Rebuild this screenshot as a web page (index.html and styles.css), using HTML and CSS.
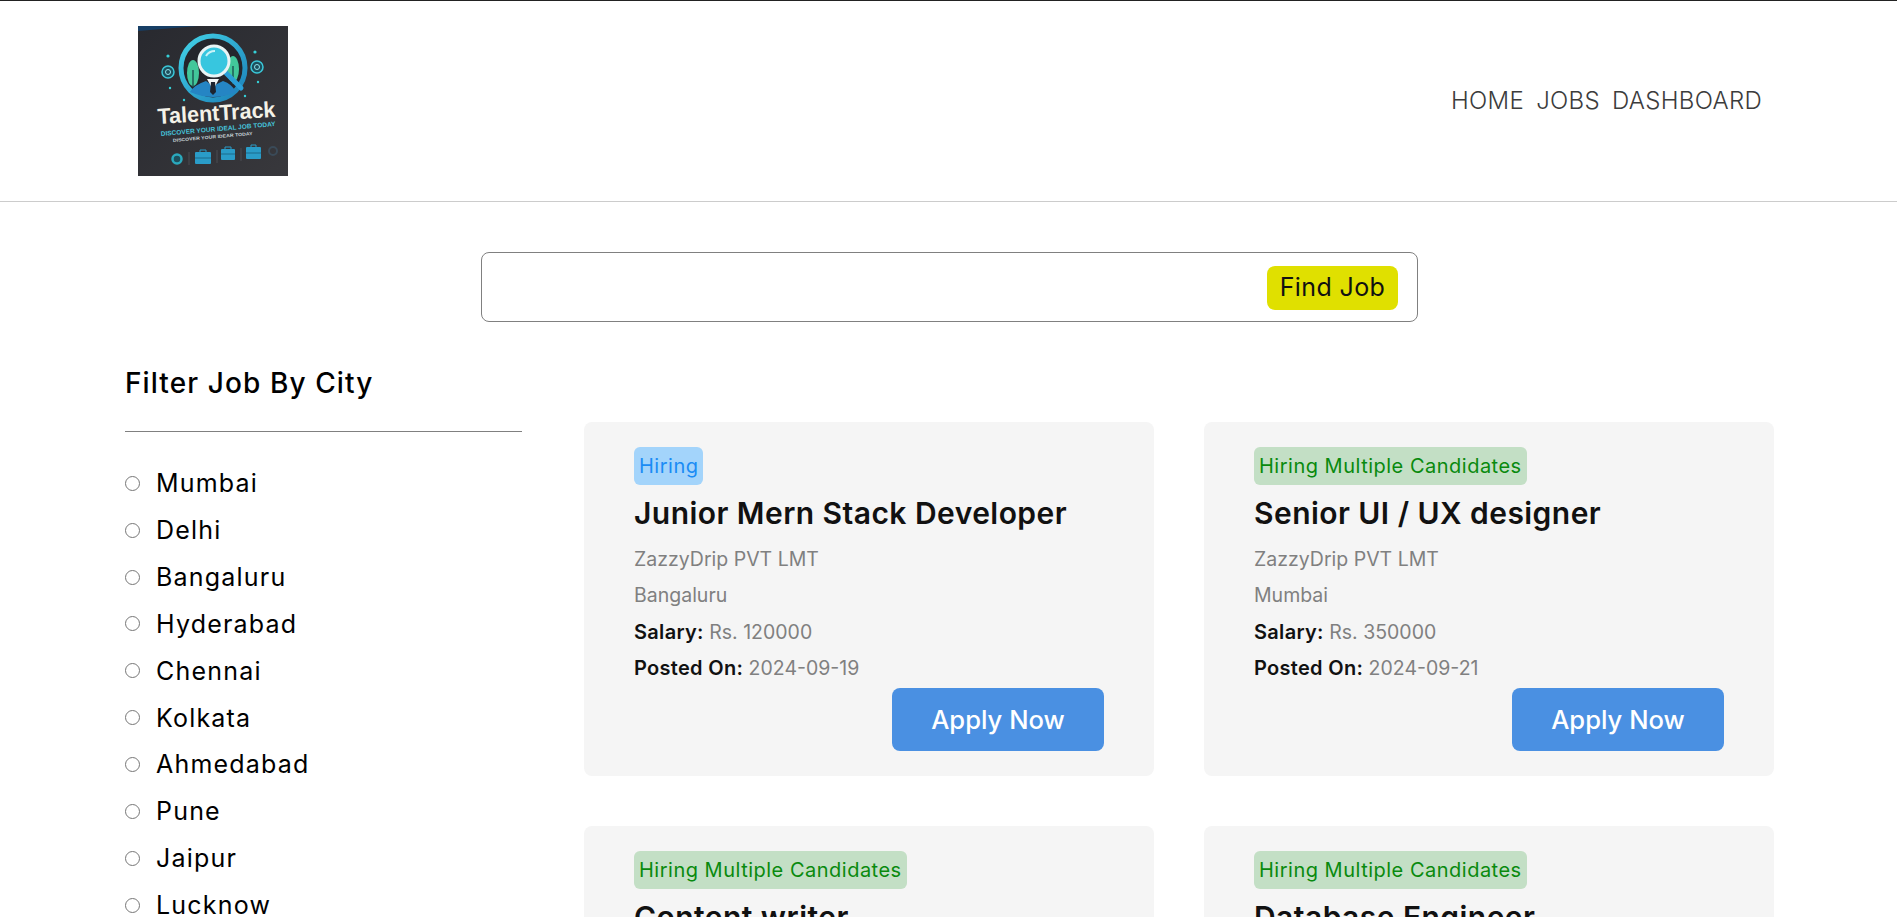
FILE: index.html
```html
<!DOCTYPE html>
<html lang="en">
<head>
    <meta charset="UTF-8">
    <meta name="viewport" content="width=device-width, initial-scale=1.0">
    <title>TalentTrack</title>
    <link rel="stylesheet" href="styles.css">
</head>
<body>
    <header class="site-header">
        <a href="#" class="logo" aria-label="TalentTrack">
            <svg width="150" height="150" viewBox="0 0 150 150">
                <defs>
                    <linearGradient id="bg" x1="0" y1="0" x2="1" y2="1">
                        <stop offset="0" stop-color="#28292f"/>
                        <stop offset="1" stop-color="#38383c"/>
                    </linearGradient>
                    <linearGradient id="ring" x1="0" y1="0" x2="1" y2="1">
                        <stop offset="0" stop-color="#43d3e8"/>
                        <stop offset="1" stop-color="#1b7fb8"/>
                    </linearGradient>
                </defs>
                <rect width="150" height="150" fill="url(#bg)"/>
                <path d="M0 0H60L0 5Z" fill="#173f66"/>
                <circle cx="75" cy="42" r="32" fill="#24262c" stroke="url(#ring)" stroke-width="5"/>
                <ellipse cx="55" cy="47" rx="6" ry="13" fill="#42c79a"/>
                <ellipse cx="95" cy="43" rx="6" ry="13" fill="#42c79a"/>
                <path d="M55 44V61M95 40V58" stroke="#1f5a55" stroke-width="1.5"/>
                <path d="M52 66Q56 59 68 55L75 60L85 55Q94 58 98 66Q75 76 52 66Z" fill="#2585c4"/>
                <path d="M69 53H81L75 64Z" fill="#f2f6f7"/>
                <path d="M73 56H77L78 66L75 69L72 66Z" fill="#1d2430"/>
                <path d="M88 47L103 62" stroke="#2a9fd8" stroke-width="5" stroke-linecap="round"/>
                <circle cx="76" cy="35" r="15" fill="#37c6df" stroke="#e8f3f4" stroke-width="3"/>
                <path d="M68 30Q71 25 77 25" stroke="#c9f3f8" stroke-width="2" fill="none"/>
                <circle cx="30" cy="46" r="6" fill="#1d4f5c" stroke="#3ac7d8" stroke-width="1.5"/>
                <circle cx="30" cy="46" r="2.5" fill="none" stroke="#8fe3ec" stroke-width="1"/>
                <circle cx="119" cy="41" r="6" fill="#1d4f5c" stroke="#3ac7d8" stroke-width="1.5"/>
                <circle cx="119" cy="41" r="2.5" fill="none" stroke="#8fe3ec" stroke-width="1"/>
                <circle cx="30" cy="30" r="1.6" fill="#35d0d8"/>
                <circle cx="117" cy="26" r="1.6" fill="#35d0d8"/>
                <circle cx="32" cy="62" r="1.2" fill="#35d0d8"/>
                <circle cx="120" cy="56" r="1.2" fill="#35d0d8"/>
                <circle cx="107" cy="70" r="1.2" fill="#35d0d8"/>
                <circle cx="46" cy="74" r="1.2" fill="#35d0d8"/>
                <text x="20" y="98" transform="rotate(-3.5 20 98)" textLength="118" lengthAdjust="spacingAndGlyphs" class="logo-name">TalentTrack</text>
                <text x="23" y="110" transform="rotate(-5 23 110)" textLength="115" lengthAdjust="spacingAndGlyphs" class="logo-tag">DISCOVER YOUR IDEAL JOB TODAY</text>
                <text x="35" y="116" transform="rotate(-5 35 116)" textLength="80" lengthAdjust="spacingAndGlyphs" class="logo-tag-small">DISCOVER YOUR IDEAR TODAY</text>
                <circle cx="39" cy="133" r="4.5" fill="#1d4f5c" stroke="#2aa9bd" stroke-width="2.5"/>
                <path d="M51 126V139M79 124V137M103 122V135" stroke="#4a4c52" stroke-width="1"/>
                <g fill="#2a9cc8">
                    <rect x="57" y="126" width="16" height="12" rx="1"/>
                    <rect x="83" y="123" width="14" height="11" rx="1"/>
                    <rect x="108" y="121" width="15" height="12" rx="1"/>
                </g>
                <path d="M62 126V124H68V126M87 123V121H93V123M113 121V119H118V121" fill="none" stroke="#2a9cc8" stroke-width="1"/>
                <path d="M57 132H73M83 128H97M108 127H123" stroke="#1a6a8c" stroke-width="1"/>
                <circle cx="135" cy="125" r="4" fill="none" stroke="#3a4a58" stroke-width="2"/>
            </svg>
        </a>
        <nav class="nav-links">
            <a href="#">HOME</a>
            <a href="#">JOBS</a>
            <a href="#">DASHBOARD</a>
        </nav>
    </header>

    <form class="search-box">
        <input type="text" class="search-input">
        <button type="button" class="find-btn">Find Job</button>
    </form>

    <main class="content">
        <aside class="filter">
            <h2>Filter Job By City</h2>
            <hr>
            <ul class="city-list">
                <li><label><input type="radio" name="city"><span>Mumbai</span></label></li>
                <li><label><input type="radio" name="city"><span>Delhi</span></label></li>
                <li><label><input type="radio" name="city"><span>Bangaluru</span></label></li>
                <li><label><input type="radio" name="city"><span>Hyderabad</span></label></li>
                <li><label><input type="radio" name="city"><span>Chennai</span></label></li>
                <li><label><input type="radio" name="city"><span>Kolkata</span></label></li>
                <li><label><input type="radio" name="city"><span>Ahmedabad</span></label></li>
                <li><label><input type="radio" name="city"><span>Pune</span></label></li>
                <li><label><input type="radio" name="city"><span>Jaipur</span></label></li>
                <li><label><input type="radio" name="city"><span>Lucknow</span></label></li>
            </ul>
        </aside>

        <section class="jobs">
            <article class="job-card">
                <span class="badge badge-blue">Hiring</span>
                <h3>Junior Mern Stack Developer</h3>
                <p>ZazzyDrip PVT LMT</p>
                <p>Bangaluru</p>
                <p><b>Salary:</b> Rs. 120000</p>
                <p><b>Posted On:</b> 2024-09-19</p>
                <button type="button" class="apply-btn">Apply Now</button>
            </article>
            <article class="job-card">
                <span class="badge badge-green">Hiring Multiple Candidates</span>
                <h3>Senior UI / UX designer</h3>
                <p>ZazzyDrip PVT LMT</p>
                <p>Mumbai</p>
                <p><b>Salary:</b> Rs. 350000</p>
                <p><b>Posted On:</b> 2024-09-21</p>
                <button type="button" class="apply-btn">Apply Now</button>
            </article>
            <article class="job-card">
                <span class="badge badge-green">Hiring Multiple Candidates</span>
                <h3>Content writer</h3>
            </article>
            <article class="job-card">
                <span class="badge badge-green">Hiring Multiple Candidates</span>
                <h3>Database Engineer</h3>
            </article>
        </section>
    </main>
</body>
</html>
```

FILE: styles.css
```css
/* Global Styles */
body {
    font-family: Inter, "Noto Sans", sans-serif;
    background-color: #fff;
    color: #000;
    margin: 0;
    padding: 0;
}

/* Header */
.site-header {
    display: flex;
    justify-content: space-between;
    align-items: center;
    border-top: 1px solid #222;
    border-bottom: 1px solid #ccc;
    padding: 25px 135px 25px 138px;
}

.logo {
    display: block;
    height: 150px;
}

.logo svg {
    display: block;
}

.logo-name {
    font-family: "Liberation Sans", sans-serif;
    font-size: 22px;
    font-weight: bold;
    fill: #f4f2e8;
}

.logo-tag {
    font-family: "Liberation Sans", sans-serif;
    font-size: 6.5px;
    font-weight: bold;
    fill: #46c4dc;
}

.logo-tag-small {
    font-family: "Liberation Sans", sans-serif;
    font-size: 4.6px;
    font-weight: bold;
    fill: #c7d3d8;
}

.nav-links {
    display: flex;
    gap: 12px;
    margin-top: -2px;
}

.nav-links a {
    font-size: 24px;
    font-weight: 300;
    letter-spacing: 0.3px;
    color: #3c3c3c;
    text-decoration: none;
}

/* Search */
.search-box {
    display: flex;
    align-items: center;
    justify-content: space-between;
    box-sizing: border-box;
    width: 937px;
    height: 70px;
    margin: 50px 0 0 481px;
    padding: 2px 19px 0;
    border: 1px solid #808080;
    border-radius: 8px;
}

.search-input {
    flex: 1;
    border: none;
    outline: none;
    background: none;
    height: 40px;
}

.find-btn {
    font-family: inherit;
    font-size: 25px;
    letter-spacing: 0.4px;
    color: #111;
    background-color: #e0e000;
    border: none;
    border-radius: 8px;
    height: 44px;
    width: 131px;
    padding: 0 0 2px;
}

/* Sidebar + job list */
.content {
    display: flex;
    align-items: flex-start;
    padding-left: 125px;
    padding-right: 123px;
    padding-top: 40px;
}

.filter {
    width: 397px;
    margin-right: 62px;
    flex-shrink: 0;
}

.filter h2 {
    font-size: 28px;
    font-weight: 500;
    letter-spacing: 1.1px;
    line-height: 40px;
    margin: 1px 0 -1px;
}

.filter hr {
    border: none;
    border-top: 1px solid #808080;
    margin: 29px 0 0;
}

.city-list {
    list-style: none;
    margin: 28px 0 0;
    padding: 0;
}

.city-list label {
    display: flex;
    align-items: center;
    gap: 16px;
    height: 46.85px;
    font-size: 25px;
    letter-spacing: 1.2px;
}

.city-list input {
    width: 15px;
    height: 15px;
    margin: 0;
}

.jobs {
    flex: 1;
    display: grid;
    grid-template-columns: 1fr 1fr;
    gap: 50px;
    margin-top: 60px;
}

/* Job card */
.job-card {
    display: flex;
    flex-direction: column;
    align-items: flex-start;
    background-color: #f5f5f5;
    border-radius: 8px;
    padding: 25px 50px;
    min-height: 354px;
    box-sizing: border-box;
}

.badge {
    font-size: 20px;
    letter-spacing: 0.5px;
    line-height: 38px;
    padding: 0 5px;
    border-radius: 6px;
}

.badge-blue {
    color: #1a8cf5;
    background-color: #a3d4fb;
}

.badge-green {
    color: #098a0e;
    background-color: #c3dfc5;
}

.job-card h3 {
    font-size: 30px;
    font-weight: 600;
    letter-spacing: 0.45px;
    line-height: 46px;
    color: #111;
    margin: 5px 0 5px;
}

.job-card p {
    font-size: 19.5px;
    line-height: 36.4px;
    color: #808080;
    margin: 0;
}

.job-card p b {
    font-size: 20px;
    font-weight: 600;
    letter-spacing: 0.3px;
    color: #111;
}

.apply-btn {
    align-self: flex-end;
    font-family: inherit;
    font-size: 25.6px;
    font-weight: 500;
    color: #fff;
    background-color: #4a90e2;
    border: none;
    border-radius: 8px;
    width: 212px;
    height: 63px;
    margin-top: 1px;
}
```
